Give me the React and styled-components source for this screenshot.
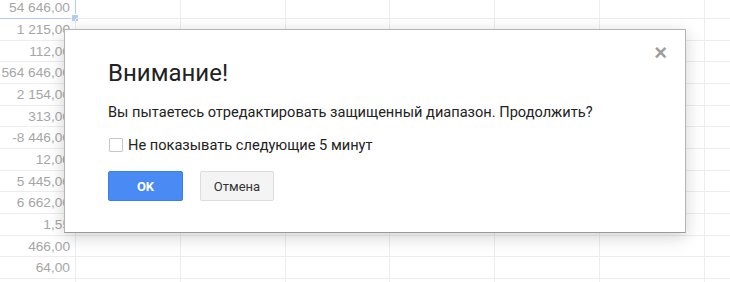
import React from "react";
import styled, { createGlobalStyle } from "styled-components";

const Global = createGlobalStyle`
  html, body { margin: 0; padding: 0; background: #fff; }
  body { width: 730px; height: 282px; overflow: hidden; }
`;

const Page = styled.div`
  position: relative;
  width: 730px;
  height: 282px;
  overflow: hidden;
  background: #fff;
`;

const Sheet = styled.div`
  display: grid;
  grid-template-columns: 76px repeat(7, 104.8px);
  grid-auto-rows: 21.667px;
  margin-top: -2.667px;
`;

const Cell = styled.div`
  box-sizing: border-box;
  border-right: 1px solid #ededed;
  border-bottom: 1px solid #ededed;
  font-family: "Liberation Sans", Arial, sans-serif;
  font-size: 13.7px;
  color: #a6a6a6;
  text-align: right;
  padding-right: 5px;
  line-height: 21px;
  white-space: nowrap;
  overflow: hidden;
  position: relative;
  ${(p) => p.$selected && `
    border-right: 1px solid #b3ccf5;
    border-bottom: 1px solid #b3ccf5;
    overflow: visible;
  `}
`;

const Handle = styled.span`
  position: absolute;
  right: -4px;
  bottom: -4px;
  width: 6px;
  height: 6px;
  background: #b3ccf5;
  border: 1px solid #fff;
`;

const Dialog = styled.div`
  position: absolute;
  left: 64px;
  top: 29px;
  width: 622px;
  height: 204px;
  box-sizing: border-box;
  background: #fff;
  border: 1px solid #b4b4b4;
  border-bottom-color: #9a9a9a;
  box-shadow: 0 4px 16px rgba(0, 0, 0, 0.18);
  padding: 27px 44px 0 43px;
  font-family: Roboto, "Liberation Sans", Arial, sans-serif;
  color: #222;
`;

const Close = styled.span`
  position: absolute;
  right: 18px;
  top: 12px;
  font-family: "Liberation Sans", Arial, sans-serif;
  font-size: 22px;
  font-weight: bold;
  color: #9e9e9e;
  line-height: 22px;
`;

const Title = styled.h1`
  margin: 0;
  font-size: 24px;
  font-weight: 400;
  line-height: 32px;
  color: #222;
`;

const Body = styled.p`
  margin: 13px 0 0;
  font-size: 14.6px;
  line-height: 20px;
`;

const CheckRow = styled.label`
  display: flex;
  align-items: center;
  gap: 5px;
  margin-top: 13px;
  font-size: 14.6px;
  line-height: 20px;
`;

const Box = styled.span`
  width: 12px;
  height: 12px;
  margin-left: 1px;
  border: 1px solid #c6c6c6;
  border-radius: 1px;
  background: #fff;
`;

const Buttons = styled.div`
  display: flex;
  gap: 17px;
  margin-top: 16px;
`;

const Button = styled.button`
  box-sizing: border-box;
  width: 75px;
  height: 30px;
  border-radius: 2px;
  font-family: Roboto, "Liberation Sans", Arial, sans-serif;
  font-size: 13px;
  padding: 0;
  cursor: pointer;
  ${(p) =>
    p.$primary
      ? `
    background: #4a8af4;
    border: 1px solid #3b7de9;
    color: #fff;
    font-weight: 700;
  `
      : `
    width: 74px;
    background: #f4f4f4;
    border: 1px solid #dcdcdc;
    color: #333;
    font-weight: 400;
  `}
`;

const values = [
  "54 646,00",
  "1 215,00",
  "112,00",
  "564 646,00",
  "2 154,00",
  "313,00",
  "-8 446,00",
  "12,00",
  "5 445,00",
  "6 662,00",
  "1,55",
  "466,00",
  "64,00",
  "",
];

export default function App() {
  return (
    <Page>
      <Global />
      <Sheet>
        {values.map((v, r) =>
          Array.from({ length: 8 }).map((_, c) => (
            <Cell key={`${r}-${c}`} $selected={r === 0 && c === 0}>
              {c === 0 ? v : ""}
              {r === 0 && c === 0 && <Handle />}
            </Cell>
          ))
        )}
      </Sheet>
      <Dialog role="dialog">
        <Close>×</Close>
        <Title>Внимание!</Title>
        <Body>Вы пытаетесь отредактировать защищенный диапазон. Продолжить?</Body>
        <CheckRow>
          <Box />
          Не показывать следующие 5 минут
        </CheckRow>
        <Buttons>
          <Button $primary>OK</Button>
          <Button>Отмена</Button>
        </Buttons>
      </Dialog>
    </Page>
  );
}
